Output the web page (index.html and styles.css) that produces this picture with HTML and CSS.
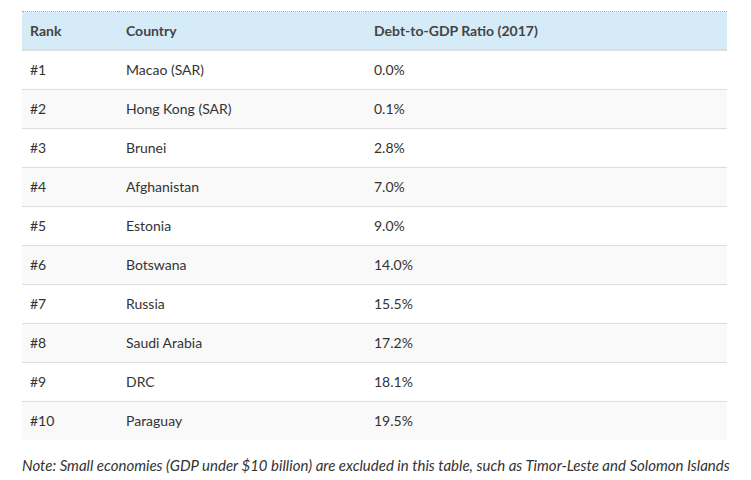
FILE: index.html
```html
<!DOCTYPE html>
<html>
<head>
<meta charset="utf-8">
<link rel="stylesheet" href="styles.css">
</head>
<body>
<div class="wrap">
<table class="rank-table">
<thead>
<tr><th class="c-rank">Rank</th><th class="c-country">Country</th><th>Debt-to-GDP Ratio (2017)</th></tr>
</thead>
<tbody>
<tr><td>#1</td><td>Macao (SAR)</td><td>0.0%</td></tr>
<tr><td>#2</td><td>Hong Kong (SAR)</td><td>0.1%</td></tr>
<tr><td>#3</td><td>Brunei</td><td>2.8%</td></tr>
<tr><td>#4</td><td>Afghanistan</td><td>7.0%</td></tr>
<tr><td>#5</td><td>Estonia</td><td>9.0%</td></tr>
<tr><td>#6</td><td>Botswana</td><td>14.0%</td></tr>
<tr><td>#7</td><td>Russia</td><td>15.5%</td></tr>
<tr><td>#8</td><td>Saudi Arabia</td><td>17.2%</td></tr>
<tr><td>#9</td><td>DRC</td><td>18.1%</td></tr>
<tr><td>#10</td><td>Paraguay</td><td>19.5%</td></tr>
</tbody>
</table>
<p class="note">Note: Small economies (GDP under $10 billion) are excluded in this table, such as Timor-Leste and Solomon Islands</p>
</div>
</body>
</html>
```
FILE: styles.css
```css
html, body { margin: 0; padding: 0; background: #fff; }
body { font-family: Lato, "Noto Sans", sans-serif; color: #333; }
.wrap { padding: 11px 24px 0 22px; }
.rank-table { width: 705px; table-layout: fixed; border-collapse: collapse; font-size: 14px; border-top: 1px dotted #aaa; }
.rank-table th { background: #d5ebf7; color: #444; font-weight: 700; text-align: left; height: 38px; padding: 0 8px; border-bottom: 2px solid #ddd; box-sizing: border-box; }
.rank-table td { height: 38px; padding: 0 8px; border-bottom: 1px solid #ddd; }
.rank-table tbody tr:nth-child(even) td { background: #f9f9f9; }
.rank-table tbody tr:last-child td { border-bottom: none; }
.c-rank { width: 96px; }
.c-country { width: 248px; }
.note { margin: 16px 0 0 0; font-size: 15px; font-style: italic; color: #333; white-space: nowrap; }
```
